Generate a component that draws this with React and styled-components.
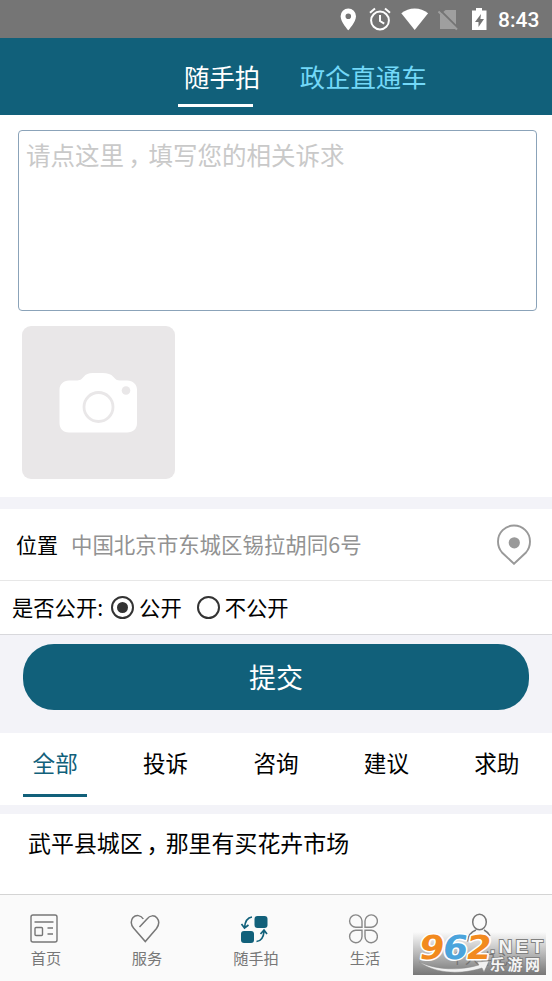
import React, { useState } from 'react';
import styled, { createGlobalStyle } from 'styled-components';

const GlobalStyle = createGlobalStyle`
    * {
        box-sizing: border-box;
    }

    body {
        margin: 0;
        background: #fff;
        color: #000;
        font-family: 'Noto Sans CJK SC', sans-serif;
    }

    button {
        font-family: inherit;
        border: 0;
        padding: 0;
        background: none;
        cursor: pointer;
    }
`;

const Screen = styled.div`
    display: flex;
    flex-direction: column;
    width: 552px;
    height: 981px;
    overflow: hidden;
    background: #f3f3f8;
`;

const StatusBar = styled.div`
    display: flex;
    align-items: center;
    flex: none;
    height: 38px;
    padding-left: 338px;
    background: #757575;
    color: #fff;
    font: 500 21px/38px Roboto, sans-serif;

    svg {
        display: block;
        flex: none;
    }

    span {
        padding-top: 2px;
        margin-left: 10px;
    }
`;

const Header = styled.div`
    display: flex;
    flex: none;
    height: 77px;
    padding-left: 178px;
    background: #11607a;
`;

const HeaderTab = styled.button`
    position: relative;
    height: 77px;
    padding: 0 0 0 6px;
    margin-right: 33.5px;
    font-size: 25.4px;
    line-height: 77px;
    white-space: nowrap;
    color: ${({ $active }) => ($active ? '#fff' : '#73d8f8')};

    &::after {
        content: '';
        display: ${({ $active }) => ($active ? 'block' : 'none')};
        position: absolute;
        left: 0;
        bottom: 8px;
        width: 75px;
        height: 3px;
        background: #fff;
    }
`;

const Compose = styled.div`
    flex: none;
    height: 382px;
    padding: 15px 15px 0 18px;
    background: #fff;
`;

const MessageBox = styled.div`
    height: 181px;
    padding: 6px 7px;
    border: 1px solid #8ba3b9;
    border-radius: 4px;
    color: #c9c9c9;
    font-size: 24.5px;
    line-height: 35px;
    white-space: nowrap;
`;

// half-width glyph set near the middle of a full-width cell
const Comma = styled.span`
    display: inline-block;
    width: 1em;
    text-indent: 0.17em;
    font-feature-settings: 'halt' 1;
`;

const PhotoButton = styled.button`
    display: block;
    width: 153px;
    height: 153px;
    margin: 15px 0 0 4px;
    border-radius: 9px;
    background: #e9e7e8;

    svg {
        display: block;
    }
`;

const LocationRow = styled.div`
    display: flex;
    align-items: center;
    flex: none;
    height: 72px;
    margin-top: 12px;
    padding: 0 20px 2px 16px;
    border-bottom: 1px solid #e7e7e7;
    background: #fff;
    font-size: 21px;

    svg {
        margin-left: auto;
    }
`;

const Address = styled.span`
    margin-left: 13px;
    color: #929292;
    font-size: 21.45px;
`;

const PublicRow = styled.div`
    display: flex;
    align-items: center;
    flex: none;
    height: 54px;
    padding-left: 12px;
    border-bottom: 1px solid #d8d8dc;
    background: #fff;
    font-size: 21.3px;
    line-height: 30px;

    > span,
    label > span:last-child {
        padding-bottom: 2px;
    }
`;

const RadioLabel = styled.label`
    display: flex;
    align-items: center;
    margin-left: ${({ $gap }) => $gap}px;
    cursor: pointer;
`;

const RadioMark = styled.span`
    display: flex;
    align-items: center;
    justify-content: center;
    width: 23px;
    height: 23px;
    margin-right: 5px;
    border: 2px solid #333;
    border-radius: 50%;

    &::after {
        content: '';
        width: 11px;
        height: 11px;
        border-radius: 50%;
        background: ${({ $checked }) => ($checked ? '#333' : 'transparent')};
    }
`;

const SubmitButton = styled.button`
    && {
        flex: none;
        height: 66px;
        margin: 9px 23px 23px;
        border-radius: 31px;
        background: #11607a;
        color: #fff;
        font-size: 27px;
        line-height: 66px;
    }
`;

const Filters = styled.div`
    display: flex;
    flex: none;
    height: 72px;
    background: #fff;
`;

const Filter = styled.button`
    display: flex;
    flex: 1;
    justify-content: center;
    font-size: 22.6px;
    color: ${({ $active }) => ($active ? '#11607a' : '#000')};

    span {
        width: 64px;
        height: 64px;
        line-height: 60px;
        border-bottom: 3px solid ${({ $active }) => ($active ? '#11607a' : 'transparent')};
    }
`;

const Post = styled.div`
    flex: none;
    height: 80px;
    margin-top: 9px;
    padding-left: 28px;
    background: #fff;
    font-size: 22.95px;
    line-height: 57px;
`;

const TabBar = styled.div`
    position: relative;
    display: flex;
    flex: none;
    height: 87px;
    padding-left: 6px;
    border-top: 1px solid #d4d4d4;
    background: #fafafa;
`;

const TabItem = styled.button`
    display: flex;
    flex-direction: column;
    align-items: center;
    width: ${({ $width }) => $width}px;
    padding-top: 16px;
    color: #777;
    font-size: 15.2px;
    line-height: 22px;
    white-space: nowrap;

    svg {
        display: block;
        margin: 0 4px 1px 0;
    }
`;

const Watermark = styled.div`
    position: absolute;
    left: 413px;
    top: 25px;
    width: 133px;
    height: 61px;
    background: linear-gradient(rgba(190, 190, 190, 0), rgba(112, 112, 112, 0.95)) 0 12px / 133px 43px no-repeat;

    svg {
        display: block;
    }
`;

const StatusIcons = () => (
    <svg width="150" height="38" viewBox="338 0 150 38" fill="#fff">
        <path fillRule="evenodd" d="M348.300 8.500a7.700 7.700 0 0 0-7.700 7.700c0 5.800 7.700 14 7.700 14s7.700-8.200 7.700-14a7.700 7.700 0 0 0-7.700-7.700zm0 4.900a2.800 2.800 0 1 1 0 5.600 2.800 2.800 0 0 1 0-5.600z" />
        <g fill="none" stroke="#fff" strokeWidth="2">
            <circle cx="380" cy="20.500" r="8.900" />
            <path d="M380 15v6l4.200 2.600M370 12.800l5-4.200M390 12.800l-5-4.200" />
        </g>
        <path d="M401.300 13.200a21.500 21.500 0 0 1 26.800 0L414.700 30z" />
        <path d="M445.500 10H456v19h-16V15z" fill="#9f9f9f" />
        <path d="M439 9l19 19" stroke="#757575" strokeWidth="2" />
        <path d="M438.500 11.500l18.500 18" stroke="#9f9f9f" strokeWidth="2" />
        <path fillRule="evenodd" d="M476 8h6v2.500h4.500V30H472V10.500h4zm5 6l-6 8h3.500v5l5.500-8h-3.600z" />
    </svg>
);

const CameraIcon = () => (
    <svg width="153" height="153" viewBox="0 0 153 153">
        <path
            d="M47 54.500h7c4 0 5.500-1 7.500-3.500 2.500-3 5-4 9-4h10c5 0 8.500 1 11 4 2 2.500 3.500 3.500 6.500 3.500h7c6 0 10 4 10 9V97c0 6-4 9.500-10 9.500H47c-6 0-9.500-4-9.500-9.500V63.500c0-5 4-9 9.500-9z"
            fill="#fff"
        />
        <circle cx="76.500" cy="81" r="14.500" fill="none" stroke="#e9e7e8" strokeWidth="2.800" />
        <circle cx="104" cy="64.500" r="4.300" fill="#e9e7e8" />
    </svg>
);

const PinIcon = () => (
    <svg width="36" height="42" viewBox="0 0 36 42">
        <path
            d="M18 40.800L6 29.500C3.500 26.500 2 23 2 18.500a16 16 0 0 1 32 0c0 4.500-1.500 8-4 11z"
            fill="none"
            stroke="#999"
            strokeWidth="1.900"
        />
        <circle cx="18.300" cy="19.800" r="5.600" fill="#999" />
    </svg>
);

const HomeIcon = () => (
    <svg width="30" height="34" viewBox="0 0 30 34" fill="none" stroke="#777" strokeWidth="1.400">
        <rect x="2" y="4" width="26" height="27" rx="2" />
        <path d="M5.500 11h19M18.500 17h5.500M18.500 23h5.500" />
        <rect x="6" y="16.500" width="7.500" height="8" rx="1" />
    </svg>
);

const ServiceIcon = () => (
    <svg width="30" height="34" viewBox="0 0 30 34" fill="none" stroke="#777" strokeWidth="1.500">
        <path d="M9.500 16L17 8c3-4 7.500-4 10-1 2.500 3 2 7-.500 10.500L15.300 30.500 3.500 17C.8 14 .5 9.500 3 6.500 6 3.500 11 4 13.300 8" />
    </svg>
);

const SnapIcon = () => (
    <svg width="30" height="34" viewBox="0 0 30 34">
        <g fill="#11607a">
            <rect x="15.500" y="5" width="13" height="12" rx="3" />
            <rect x="2" y="20" width="13" height="12" rx="3" />
        </g>
        <g fill="none" stroke="#11607a" strokeWidth="1.700">
            <path d="M13 6C8.500 6.500 6 10 5.500 17M2.500 13l3 4 4-3M17.500 30.500c4.500-.500 7-3.500 7.500-10M21.500 23l3.500-4 3 4" />
        </g>
    </svg>
);

const LifeIcon = () => (
    <svg width="30" height="34" viewBox="0 0 30 34" fill="none" stroke="#888" strokeWidth="1.400">
        <path d="M14 16.300H8A6.200 6.200 0 1 1 14 10zM17 16.300h6A6.200 6.200 0 1 0 17 10zM14 19.300H8A6.200 6.200 0 1 0 14 25.500zM17 19.300h6a6.200 6.200 0 1 1-6 6.200z" />
    </svg>
);

const ProfileIcon = () => (
    <svg width="30" height="34" viewBox="0 0 30 34" fill="none" stroke="#777" strokeWidth="1.500">
        <ellipse cx="16.500" cy="11" rx="6.800" ry="7.700" />
        <path d="M13 19C8 21 5 24.500 4.500 30.500M21 19c3 1.500 5 4 6 6" />
    </svg>
);

const WatermarkLogo = () => (
    <svg width="133" height="61" viewBox="0 -12 133 61">
        <g
            transform="translate(4 0) skewX(-9)"
            fontFamily="DejaVu Sans, sans-serif"
            fontWeight="700"
            fontSize="33"
            stroke="#fff"
            strokeWidth="3"
            strokeLinejoin="round"
            paintOrder="stroke"
        >
            <text x="5" y="27" textLength="25" lengthAdjust="spacingAndGlyphs" fill="#f28a1e">9</text>
            <text x="28.500" y="27" textLength="25" lengthAdjust="spacingAndGlyphs" fill="#4ba4dc">6</text>
            <text x="52" y="27" textLength="25" lengthAdjust="spacingAndGlyphs" fill="#f28a1e">2</text>
        </g>
        <path d="M6 30c18 8 40 9 60 3l-2-3 12-1-5 11-2-4C50 42 25 43 6 30z" fill="#f1f1f1" stroke="#888" strokeWidth="0.500" />
        <g fill="#f4f4f4" stroke="#808080" strokeWidth="1.800" paintOrder="stroke" fontWeight="700">
            <text x="77" y="21" fontFamily="Liberation Sans, sans-serif" fontSize="19" textLength="53">.NET</text>
            <text x="77" y="38" fontFamily="Noto Sans CJK SC, sans-serif" fontSize="15" textLength="50">乐游网</text>
        </g>
    </svg>
);

const FILTERS = ['全部', '投诉', '咨询', '建议', '求助'];

const TABS = [
    { label: '首页', width: 80, Icon: HomeIcon },
    { label: '服务', width: 122, Icon: ServiceIcon },
    { label: '随手拍', width: 96, Icon: SnapIcon },
    { label: '生活', width: 122, Icon: LifeIcon },
    { label: '个人中心', width: 108, Icon: ProfileIcon }
];

const App = () => {
    const [isPublic, setIsPublic] = useState(true);
    const [filter, setFilter] = useState(FILTERS[0]);

    return (
        <Screen>
            <GlobalStyle />
            <StatusBar>
                <StatusIcons />
                <span>8:43</span>
            </StatusBar>
            <Header>
                <HeaderTab $active>随手拍</HeaderTab>
                <HeaderTab>政企直通车</HeaderTab>
            </Header>
            <Compose>
                <MessageBox>请点这里<Comma>，</Comma>填写您的相关诉求</MessageBox>
                <PhotoButton>
                    <CameraIcon />
                </PhotoButton>
            </Compose>
            <LocationRow>
                位置
                <Address>中国北京市东城区锡拉胡同6号</Address>
                <PinIcon />
            </LocationRow>
            <PublicRow>
                <span>是否公开:</span>
                <RadioLabel $gap={8} onClick={() => setIsPublic(true)}>
                    <RadioMark $checked={isPublic} />
                    <span>公开</span>
                </RadioLabel>
                <RadioLabel $gap={15} onClick={() => setIsPublic(false)}>
                    <RadioMark $checked={!isPublic} />
                    <span>不公开</span>
                </RadioLabel>
            </PublicRow>
            <SubmitButton>提交</SubmitButton>
            <Filters>
                {FILTERS.map((name) => (
                    <Filter key={name} $active={name === filter} onClick={() => setFilter(name)}>
                        <span>{name}</span>
                    </Filter>
                ))}
            </Filters>
            <Post>武平县城区<Comma>，</Comma>那里有买花卉市场</Post>
            <TabBar>
                {TABS.map(({ label, width, Icon }) => (
                    <TabItem key={label} $width={width}>
                        <Icon />
                        {label}
                    </TabItem>
                ))}
                <Watermark>
                    <WatermarkLogo />
                </Watermark>
            </TabBar>
        </Screen>
    );
};

export default App;
